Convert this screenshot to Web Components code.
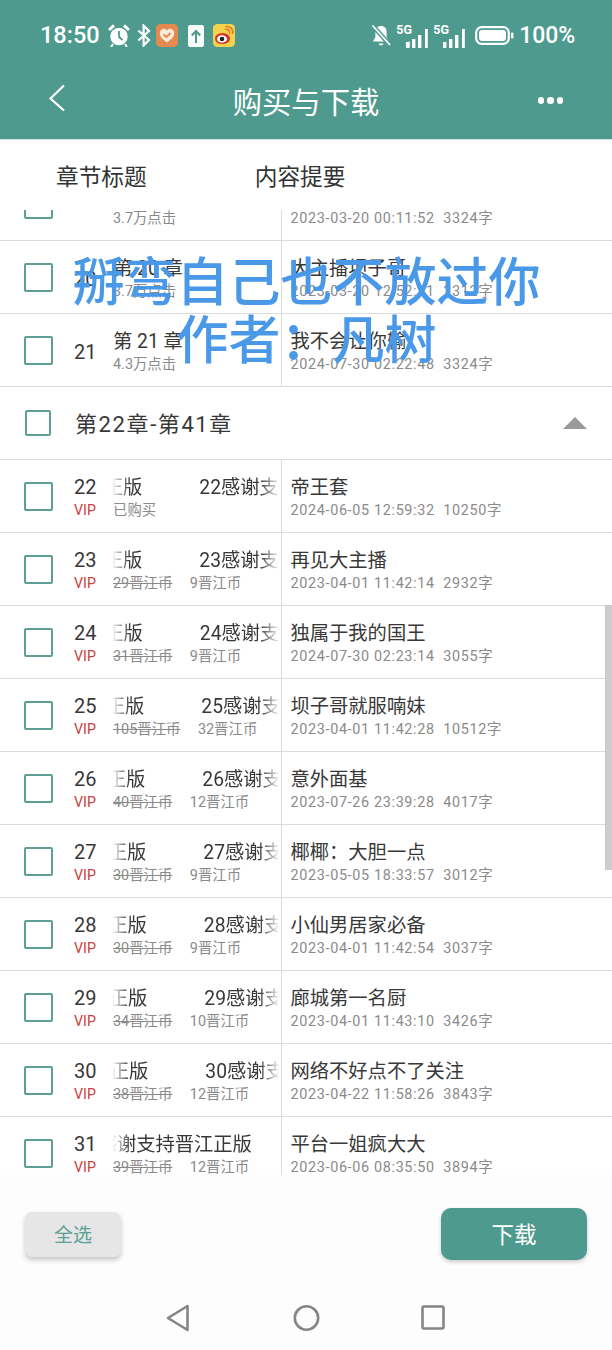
<!DOCTYPE html>
<html lang="zh"><head><meta charset="utf-8"><title>购买与下载</title>
<style>
html,body{margin:0;padding:0;background:#fff}
body{width:612px;height:1350px;overflow:hidden;font-family:Roboto,"Noto Sans CJK SC",sans-serif;color:#333}
</style></head><body>
<purchase-screen>
  <status-bar slot="top"></status-bar>
  <app-bar slot="top">购买与下载</app-bar>
  <column-head slot="top"></column-head>

  <chapter-row num=""><span slot="sub">3.7万点击</span><span slot="meta">2023-03-20 00:11:52&nbsp; 3324字</span></chapter-row>
  <chapter-row num="20"><span slot="title">第 20 章</span><span slot="sub">3.7万点击</span><span slot="name">大主播坝子哥</span><span slot="meta">2023-03-20 12:52:11&nbsp; 2312字</span></chapter-row>
  <chapter-row num="21"><span slot="title">第 21 章</span><span slot="sub">4.3万点击</span><span slot="name">我不会让你输</span><span slot="meta">2024-07-30 02:22:48&nbsp; 3324字</span></chapter-row>
  <group-row>第22章-第41章</group-row>
  <chapter-row num="22" vip><fade-title slot="title" n="22" end="29.5"></fade-title><span slot="sub">已购买</span><span slot="name">帝王套</span><span slot="meta">2024-06-05 12:59:32&nbsp; 10250字</span></chapter-row>
  <chapter-row num="23" vip><fade-title slot="title" n="23" end="29.5"></fade-title><price-tag slot="sub" old="29" now="9"></price-tag><span slot="name">再见大主播</span><span slot="meta">2023-04-01 11:42:14&nbsp; 2932字</span></chapter-row>
  <chapter-row num="24" vip><fade-title slot="title" n="24" end="30"></fade-title><price-tag slot="sub" old="31" now="9"></price-tag><span slot="name">独属于我的国王</span><span slot="meta">2024-07-30 02:23:14&nbsp; 3055字</span></chapter-row>
  <chapter-row num="25" vip><fade-title slot="title" n="25" end="31.5"></fade-title><price-tag slot="sub" old="105" now="32"></price-tag><span slot="name">坝子哥就服喃妹</span><span slot="meta">2023-04-01 11:42:28&nbsp; 10512字</span></chapter-row>
  <chapter-row num="26" vip><fade-title slot="title" n="26" end="32.5"></fade-title><price-tag slot="sub" old="40" now="12"></price-tag><span slot="name">意外面基</span><span slot="meta">2023-07-26 23:39:28&nbsp; 4017字</span></chapter-row>
  <chapter-row num="27" vip><fade-title slot="title" n="27" end="33.5"></fade-title><price-tag slot="sub" old="30" now="9"></price-tag><span slot="name">椰椰：大胆一点</span><span slot="meta">2023-05-05 18:33:57&nbsp; 3012字</span></chapter-row>
  <chapter-row num="28" vip><fade-title slot="title" n="28" end="34"></fade-title><price-tag slot="sub" old="30" now="9"></price-tag><span slot="name">小仙男居家必备</span><span slot="meta">2023-04-01 11:42:54&nbsp; 3037字</span></chapter-row>
  <chapter-row num="29" vip><fade-title slot="title" n="29" end="34.5"></fade-title><price-tag slot="sub" old="34" now="10"></price-tag><span slot="name">廊城第一名厨</span><span slot="meta">2023-04-01 11:43:10&nbsp; 3426字</span></chapter-row>
  <chapter-row num="30" vip><fade-title slot="title" n="30" end="35.5"></fade-title><price-tag slot="sub" old="38" now="12"></price-tag><span slot="name">网络不好点不了关注</span><span slot="meta">2023-04-22 11:58:26&nbsp; 3843字</span></chapter-row>
  <chapter-row num="31" vip><fade-title slot="title" n="31" end="139"></fade-title><price-tag slot="sub" old="39" now="12"></price-tag><span slot="name">平台一姐疯大大</span><span slot="meta">2023-06-06 08:35:50&nbsp; 3894字</span></chapter-row>

  <action-bar slot="bottom"></action-bar>
  <nav-bar slot="bottom"></nav-bar>
  <book-banner slot="overlay"></book-banner>
</purchase-screen>
<script>
const def=(name,html,setup)=>customElements.define(name,class extends HTMLElement{
  constructor(){super();const r=this.attachShadow({mode:'open'});r.innerHTML=typeof html==='function'?html(this):html;}
  connectedCallback(){ if(typeof html==='function'){this.shadowRoot.innerHTML=html(this);} if(setup)setup(this);}
});
const GREEN='#4f9a8e';

def('purchase-screen',`<style>
:host{display:block;position:relative;width:612px;height:1350px;overflow:hidden;background:#fff}
.wrap{display:flex;flex-direction:column;height:100%}
.list{flex:1;min-height:0;overflow:hidden;position:relative}
.scroll{margin-top:-42px}
.thumb{position:absolute;right:0;top:395px;width:7px;height:265px;background:#cdcdcd}
</style><div class="wrap"><slot name="top"></slot>
<div class="list"><div class="scroll"><slot></slot></div><div class="thumb"></div></div>
<slot name="bottom"></slot></div><slot name="overlay"></slot>`);

def('status-bar',`<style>
:host{display:flex;align-items:center;height:71px;box-sizing:border-box;padding:0 37px 0 40px;background:${GREEN};color:#fff;font:500 23.500px/1 Roboto,sans-serif}
.l,.r{display:flex;align-items:center}
.sp{flex:1}
svg{display:block;flex:none}
.sig{position:relative;width:33px;height:24px}
.sig b{position:absolute;left:0;top:0;font:700 12.500px/12px "Liberation Sans Narrow",Roboto,sans-serif}
.sig svg{position:absolute;right:0;bottom:0}
.sig .arr{left:9px;right:auto;bottom:0}
</style>
<div class="l"><span style="margin-right:8px">18:50</span>
<svg width="22" height="23" viewBox="0 0 22 23" style="margin-right:7px"><circle cx="11" cy="12.500" r="8.700" fill="#fff"/><path d="M11 7v6l3.600 3" fill="none" stroke="${GREEN}" stroke-width="1.800"/><path d="M1 6l5-4.600M21 6l-5-4.600" stroke="#fff" stroke-width="3"/><path d="M5 20l-2 3M17 20l2 3" stroke="#fff" stroke-width="2"/></svg>
<svg width="14" height="23" viewBox="0 0 14 23" style="margin-right:5px"><path d="M1.300 6.500L12 16l-5.400 5.400V1.600L12 7 1.300 16.500" fill="none" stroke="#fff" stroke-width="2.200"/></svg>
<svg width="22" height="23" viewBox="0 0 22 23" style="margin-right:10px"><rect width="22" height="23" rx="4.500" fill="#e58a4e"/><path d="M11 18.500C7 15.500 3.800 13 3.800 9c0-2.600 2-4.200 4-4.200 1.300 0 2.500.6 3.200 1.800.7-1.200 1.900-1.800 3.200-1.800 2 0 4 1.600 4 4.200 0 4-3.200 6.500-7.200 9.500z" fill="#fbe9da"/><path d="M7.500 10.500l3 2.500 4-4" fill="none" stroke="#e58a4e" stroke-width="1.800"/></svg>
<svg width="16" height="22" viewBox="0 0 16 22" style="margin-right:9px"><rect width="16" height="22" rx="2" fill="#f7fbfa"/><path d="M8 18V6.500M3.800 10.500L8 6l4.200 4.500" fill="none" stroke="${GREEN}" stroke-width="2"/></svg>
<svg width="22" height="23" viewBox="0 0 22 23"><rect width="22" height="23" rx="4.500" fill="#f3d24d"/><ellipse cx="9.500" cy="14.500" rx="7.500" ry="5.500" fill="#d9332a"/><ellipse cx="9" cy="15" rx="5" ry="3.700" fill="#fff"/><circle cx="9" cy="15" r="2.300" fill="#222"/><path d="M12 5.500c3-1 5.500 2 4.500 4.500M12.500 2.800c5-1.200 8.500 3 7 7.200" fill="none" stroke="#e8792a" stroke-width="1.500"/></svg>
</div>
<div class="sp"></div>
<div class="r">
<svg width="20" height="24" viewBox="0 0 20 24" style="margin-right:5px"><path d="M10 2c-3.600 0-5.600 2.600-5.600 6v5L2 17.500h16L15.600 13V8C15.600 4.600 13.600 2 10 2z" fill="#fff"/><path d="M7.500 19.500a2.600 2.600 0 0 0 5 0z" fill="#fff"/><path d="M1.500 1.500L19 21" stroke="${GREEN}" stroke-width="4.500"/><path d="M1.500 1.500L19 21" stroke="#fff" stroke-width="1.800"/></svg>
<div class="sig"><b>5G</b><svg class="arr" width="6" height="7" viewBox="0 0 6 7"><path d="M1.500 7V1M4.500 0v6" stroke="#b9d6d1" stroke-width="1.200"/></svg><svg width="24" height="19" viewBox="0 0 24 19"><path d="M1 13h3.400v6H1zM7 10h3.400v9H7zM13 6h3.400v13H13zM20 0h2.800v19H20z" fill="#fff"/></svg></div>
<div class="sig" style="margin-left:4px"><b>5G</b><svg width="24" height="19" viewBox="0 0 24 19"><path d="M1 13h3.400v6H1zM7 10h3.400v9H7zM13 6h3.400v13H13zM20 0h2.800v19H20z" fill="#fff"/></svg></div>
<svg width="39" height="19" viewBox="0 0 39 19" style="margin-left:9px;margin-right:5px"><rect x="1.200" y="1.200" width="32.600" height="16.600" rx="5.500" fill="none" stroke="#fff" stroke-width="2.200"/><rect x="4" y="4" width="27" height="11" rx="3" fill="#fff"/><rect x="36" y="6.500" width="2.400" height="6" rx="1" fill="#fff"/></svg>
<span style="font-size:23px;letter-spacing:-.1px">100%</span></div>`);

def('app-bar',`<style>
:host{display:flex;align-items:center;justify-content:center;position:relative;height:68px;background:${GREEN};color:#fff;font:400 29.300px/1 "Noto Sans CJK SC",sans-serif;border-bottom:1px solid #cfe0dd}
.b{position:absolute;left:47px;top:12px}
.m{position:absolute;right:49px;top:26px;display:flex;gap:3px}
.m i{width:6.500px;height:6.500px;border-radius:50%;background:#fff;display:block}
.t{position:relative;top:-4px}
</style><svg class="b" width="20" height="30" viewBox="0 0 20 30"><path d="M17 2.500L3.500 15.500 17 27.500" fill="none" stroke="#fff" stroke-width="2.200"/></svg><span class="t"><slot></slot></span><div class="m"><i></i><i></i><i></i></div>`);

def('column-head',`<style>
:host{display:flex;align-items:center;height:70px;box-sizing:border-box;padding:2px 0 0 56px;background:#fff;color:#333;font:400 22.700px/1 "Noto Sans CJK SC",sans-serif;position:relative;z-index:2}
span:last-child{margin-left:108px}
</style><span>章节标题</span><span>内容提要</span>`);

def('check-box',`<style>
:host{display:block;box-sizing:border-box;width:var(--s,29px);height:var(--s,29px);border:2px solid #5d9f95;border-radius:2px;background:#fff}
</style>`);

def('chapter-row',h=>`<style>
:host{display:grid;grid-template-columns:281px 1px 1fr;height:73px;box-sizing:border-box;border-bottom:1px solid #dcdcdc;background:#fff}
.l{display:grid;grid-template-columns:50px 39px 1fr;align-items:center;padding-left:24px;min-width:0}
.n{display:flex;flex-direction:column;line-height:1;color:#383838;font-size:20px;padding-top:3px}
.v{color:#c8413c;font-size:14.200px;margin-top:6px}
.t{display:flex;flex-direction:column;min-width:0;font-size:19.300px;line-height:22px;color:#383838;padding-top:3px}
.ti{height:22px}
.s{font-size:14.400px;line-height:17px;color:#8a8a8a;margin-top:3px;white-space:nowrap}
.d{background:#dcdcdc}
.r{padding:3px 0 0 8.500px;display:flex;flex-direction:column;justify-content:center;white-space:nowrap}
.a{font-size:19.300px;line-height:22px;color:#383838;height:22px}
.b{font-size:14.400px;line-height:17px;color:#8a8a8a;margin-top:3px;letter-spacing:.66px}
</style>
<div class="l"><check-box></check-box><div class="n"><span>${h.getAttribute('num')}</span>${h.hasAttribute('vip')?'<span class="v">VIP</span>':''}</div>
<div class="t"><div class="ti"><slot name="title"></slot></div><div class="s"><slot name="sub"></slot></div></div></div>
<div class="d"></div>
<div class="r"><div class="a"><slot name="name"></slot></div><div class="b"><slot name="meta"></slot></div></div>`);

def('fade-title',h=>{const end=+h.getAttribute('end');const n=h.getAttribute('n');return `<style>
:host{display:block;width:165px;height:22px;overflow:hidden;white-space:nowrap;-webkit-mask-image:linear-gradient(90deg,rgba(0,0,0,.05) 0,#000 17px,#000 147px,rgba(0,0,0,.1) 165px);mask-image:linear-gradient(90deg,rgba(0,0,0,.05) 0,#000 17px,#000 147px,rgba(0,0,0,.1) 165px)}
.i{display:flex;margin-left:${end-154.4}px}
.g{margin-left:57px}
</style><div class="i"><span>感谢支持晋江正版</span><span class="g">${n}感谢支持晋江正版</span></div>`});

def('price-tag',h=>`<style>
:host{display:block;white-space:nowrap}
s{color:#8a8a8a;text-decoration-thickness:1px}
span{margin-left:17.500px}
</style><s>${h.getAttribute('old')}晋江币</s><span>${h.getAttribute('now')}晋江币</span>`);

def('group-row',`<style>
:host{display:flex;align-items:center;height:73px;box-sizing:border-box;padding:0 25px;border-bottom:1px solid #dcdcdc;background:#fff;color:#383838;font-size:22px}
check-box{--s:26px;margin-right:24px}
.t{flex:1;padding-bottom:2px;letter-spacing:1.600px}
svg{display:block}
</style><check-box></check-box><span class="t"><slot></slot></span><svg width="24" height="12" viewBox="0 0 24 12"><path d="M12 0L24 12H0z" fill="#9a9a9a"/></svg>`);

def('action-bar',`<style>
:host{display:flex;align-items:center;justify-content:space-between;height:104px;box-sizing:border-box;padding:0 25px;background:#fdfdfd;position:relative;z-index:2}
.a{width:96px;height:45px;margin-top:14px;padding-bottom:2px;box-sizing:border-box;border-radius:7px;background:#e6e6e6;color:#5c9f94;font-size:19px;display:flex;align-items:center;justify-content:center;box-shadow:0 3px 5px rgba(0,0,0,.22)}
.b{width:146px;height:52px;margin-top:14px;padding-bottom:3px;box-sizing:border-box;border-radius:10px;background:${GREEN};color:#fff;font-size:22.500px;display:flex;align-items:center;justify-content:center;box-shadow:0 2px 4px rgba(0,0,0,.2)}
</style><div class="a">全选</div><div class="b">下载</div>`);

def('nav-bar',`<style>
:host{display:block;height:71px;background:#fdfdfd}
svg{display:block;margin-top:25px}
.w{display:flex;padding-left:166px}
</style><div class="w">
<svg width="24" height="28" viewBox="0 0 24 28"><path d="M21.500 2L2 14l19.500 12z" fill="none" stroke="#858585" stroke-width="2.600" stroke-linejoin="round"/></svg>
<svg width="27" height="28" viewBox="0 0 27 28" style="margin-left:102.500px"><circle cx="13.500" cy="14" r="11.700" fill="none" stroke="#858585" stroke-width="2.600"/></svg>
<svg width="24" height="25" viewBox="0 0 24 25" style="margin-top:26px;margin-left:101.500px"><rect x="1.500" y="1.500" width="21" height="22" rx="1.500" fill="none" stroke="#858585" stroke-width="2.600"/></svg>
</div>`);

def('book-banner',`<style>
:host{position:absolute;left:0;right:0;top:250px;text-align:center;color:#4a98e8;font:500 52px/58px "Noto Sans CJK SC",sans-serif;pointer-events:none;z-index:5}
div{margin-left:1px}
</style><div>掰弯自己也不放过你</div><div>作者：凡树</div>`);
</script>
</body></html>
